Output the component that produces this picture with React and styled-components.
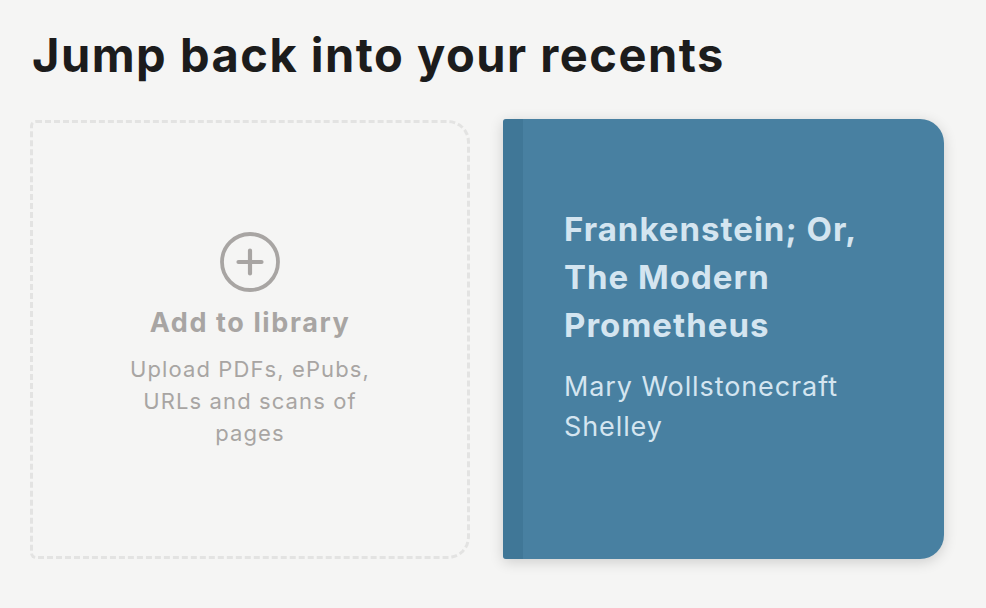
import React from "react";
import styled, { createGlobalStyle } from "styled-components";

const GlobalStyle = createGlobalStyle`
  html, body {
    margin: 0;
    padding: 0;
    background: #f5f5f4;
  }
  body {
    font-family: Inter, "Noto Sans", sans-serif;
  }
`;

const recents = [
  {
    id: 1,
    title: "Frankenstein; Or, The Modern Prometheus",
    author: "Mary Wollstonecraft Shelley",
    color: "#4880a1",
  },
];

const App = () => {
  return (
    <>
      <GlobalStyle />
      <Page>
        <Heading>Jump back into your recents</Heading>
        <Shelf>
          <AddCard>
            <PlusIcon />
            <AddTitle>Add to library</AddTitle>
            <AddText>Upload PDFs, ePubs, URLs and scans of pages</AddText>
          </AddCard>
          {recents.map((book) => (
            <Book key={book.id} $color={book.color}>
              <Spine />
              <Cover>
                <BookTitle>{book.title}</BookTitle>
                <BookAuthor>{book.author}</BookAuthor>
              </Cover>
            </Book>
          ))}
        </Shelf>
      </Page>
    </>
  );
};

const PlusIcon = () => (
  <svg width='62' height='62' viewBox='0 0 62 62' fill='none'>
    <circle cx='31' cy='31' r='28' stroke='#a8a5a3' strokeWidth='3.8' />
    <path
      d='M31 19.5v23M19.5 31h23'
      stroke='#a8a5a3'
      strokeWidth='4.2'
      strokeLinecap='round'
    />
  </svg>
);

const Page = styled.div`
  padding: 26px 30px 40px 30px;
`;

const Heading = styled.h1`
  margin: 0 0 36px 2px;
  font-size: 47px;
  font-weight: 700;
  color: #1c1c1c;
  letter-spacing: 1.5px;
  line-height: 58px;
`;

const Shelf = styled.div`
  display: grid;
  grid-template-columns: 440px 441px;
  gap: 33px;
`;

const AddCard = styled.div`
  box-sizing: border-box;
  height: 439px;
  border: 3px dashed #e3e3e2;
  border-radius: 6px 22px 22px 6px;
  display: flex;
  flex-direction: column;
  align-items: center;
  justify-content: center;
  text-align: center;
  color: #a8a5a3;
  padding: 0 88px;
`;

const AddTitle = styled.div`
  margin-top: 12px;
  font-size: 27px;
  font-weight: 700;
  letter-spacing: 1.6px;
  line-height: 36px;
`;

const AddText = styled.div`
  margin-top: 12px;
  font-size: 22px;
  line-height: 32px;
  letter-spacing: 1.1px;
  font-weight: 400;
`;

const Book = styled.div`
  display: flex;
  height: 440px;
  margin-top: -1px;
  background: ${(p) => p.$color};
  border-radius: 3px 24px 24px 3px;
  overflow: hidden;
  box-shadow: 0 3px 14px rgba(0, 0, 0, 0.16);
`;

const Spine = styled.div`
  width: 20px;
  flex-shrink: 0;
  background: rgba(40, 90, 125, 0.25);
`;

const Cover = styled.div`
  width: 310px;
  padding: 86px 0 0 41px;
  color: #d4e5f0;
`;

const BookTitle = styled.div`
  font-size: 33px;
  font-weight: 700;
  letter-spacing: 1px;
  line-height: 48px;
`;

const BookAuthor = styled.div`
  margin-top: 18px;
  font-size: 27px;
  font-weight: 400;
  letter-spacing: 0.9px;
  line-height: 40px;
`;

export default App;
